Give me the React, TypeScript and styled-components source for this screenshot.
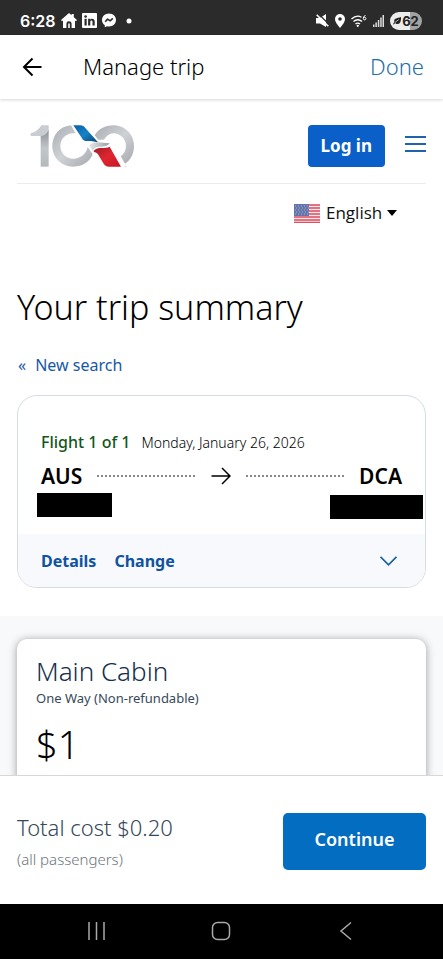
import React from "react";
import styled, { createGlobalStyle } from "styled-components";

const GlobalStyle = createGlobalStyle`
  *, *::before, *::after { box-sizing: border-box; }
  html, body { margin: 0; padding: 0; background: #fff; }
  body, button, select { font-family: "Noto Sans", "Open Sans", sans-serif; }
  button { border: 0; background: none; padding: 0; cursor: pointer; }
  svg { display: block; flex: none; }
`;

const Screen = styled.div`
  display: flex;
  flex-direction: column;
  height: 100vh;
  overflow: hidden;
  color: #000;
`;

const StatusBar = styled.div`
  display: flex;
  align-items: center;
  justify-content: space-between;
  flex: none;
  height: 35px;
  padding: 6px 21px 0 20px;
  background: #2b2b2b;
  color: #fff;
`;

const StatusGroup = styled.div<{ $gap: number }>`
  display: flex;
  align-items: center;
  gap: ${(p) => p.$gap}px;
`;

const Clock = styled.span`
  font: 600 16px/20px Inter, sans-serif;
`;

const Battery = styled.span`
  display: flex;
  align-items: center;
  justify-content: center;
  gap: 1px;
  width: 32px;
  height: 18px;
  border-radius: 9px;
  background: linear-gradient(90deg, #ececec 62%, #a2a2a2 62%);
  color: #222;
  font: 700 13px/18px Inter, sans-serif;
`;

const AppBar = styled.header`
  display: flex;
  align-items: center;
  flex: none;
  height: 64px;
  padding: 0 19px 0 22px;
  background: #fff;
  box-shadow: 0 1px 3px rgba(0, 0, 0, 0.16);
  z-index: 1;
`;

const AppTitle = styled.span`
  flex: 1;
  margin: 0 0 2px 41px;
  font: 300 22px/30px "Noto Sans", sans-serif;
`;

const DoneButton = styled.button`
  margin-bottom: 2px;
  color: #1f6ea8;
  font-size: 22px;
  font-weight: 300;
  line-height: 30px;
`;

const Content = styled.main`
  flex: 1;
  min-height: 0;
  overflow: hidden;
`;

const SiteHeader = styled.div`
  display: flex;
  align-items: center;
  margin: 0 17px;
  height: 85px;
  padding: 9px 0 0 13px;
  border-bottom: 1px solid #ececec;
`;

const LoginButton = styled.button`
  height: 42px;
  margin-left: auto;
  padding: 0 13px;
  border-radius: 4px;
  background: #0a5fc8;
  color: #fff;
  font-size: 17px;
  font-weight: 700;
`;

const MenuButton = styled.button`
  margin: 0 0 4px 20px;
`;

const LanguageRow = styled.div`
  display: flex;
  align-items: center;
  justify-content: flex-end;
  gap: 6px;
  padding: 16px 46px 0 17px;
`;

const LanguagePicker = styled.div`
  display: flex;
  align-items: center;
  gap: 4px;
`;

const LanguageSelect = styled.select`
  appearance: none;
  border: 0;
  padding: 0;
  background: none;
  color: #111;
  font: 400 17px/26px "Open Sans", sans-serif;
`;

const Summary = styled.section`
  padding: 56px 17px 28px;
`;

const Heading = styled.h1`
  margin: 0;
  font: 300 34px/50px "Noto Sans", sans-serif;
`;

const BackLink = styled.a`
  display: inline-flex;
  gap: 9px;
  margin: 21px 1px 18px;
  color: #1758a6;
  font-size: 16px;
  line-height: 24px;
  text-decoration: none;
`;

const TripCard = styled.article`
  border: 1px solid #d5dce2;
  border-radius: 20px;
  overflow: hidden;
  background: #fff;
`;

const TripBody = styled.div`
  padding: 33px 23px 15px;
`;

const FlightLine = styled.div`
  display: flex;
  align-items: baseline;
  gap: 11px;
  line-height: 26px;
`;

const FlightNumber = styled.h2`
  margin: 0;
  color: #14571a;
  font-size: 16px;
  font-weight: 500;
`;

const FlightDate = styled.span`
  font-size: 14px;
  font-weight: 300;
`;

const Route = styled.div`
  display: flex;
  align-items: center;
  margin-top: 6px;
`;

const Airport = styled.span`
  font-size: 21px;
  font-weight: 600;
  line-height: 28px;
`;

const Dots = styled.span`
  flex: 1;
  height: 2px;
  margin: 0 14px;
  background: radial-gradient(circle, #85898d 1px, transparent 1px) 0 0 / 4px 2px repeat-x;
`;

const Redactions = styled.div`
  display: flex;
  align-items: flex-start;
  justify-content: space-between;
  margin: 3px -21px 0 -4px;
`;

const Redacted = styled.span<{ $width: number; $drop: number }>`
  width: ${(p) => p.$width}px;
  height: 24px;
  margin-top: ${(p) => p.$drop}px;
  background: #000;
`;

const TripActions = styled.div`
  display: flex;
  align-items: center;
  gap: 18px;
  height: 53px;
  padding: 0 28px 0 23px;
  background: #f7f9fc;
`;

const TextButton = styled.button`
  color: #10539f;
  font-size: 16px;
  font-weight: 700;
  line-height: 24px;
`;

const ExpandButton = styled.button`
  margin-left: auto;
`;

const FareSection = styled.section`
  padding: 23px 17px 0;
  background: #f7f9fb;
`;

const FareCard = styled.article`
  height: 240px;
  padding: 14px 19px;
  border-radius: 10px;
  background: #fff;
  box-shadow: 0 1px 8px rgba(0, 0, 0, 0.38);
`;

const FareName = styled.h2`
  margin: 0;
  color: #15304c;
  font: 300 26px/36px "Noto Sans", sans-serif;
`;

const FareNote = styled.p`
  margin: 0;
  color: #36495a;
  font-size: 13px;
  line-height: 18px;
`;

const FarePrice = styled.p`
  margin: 11px 0 0;
  font-size: 38px;
  font-weight: 300;
  line-height: 52px;
`;

const TotalBar = styled.footer`
  display: flex;
  align-items: center;
  justify-content: space-between;
  flex: none;
  height: 129px;
  padding: 2px 17px 0;
  border-top: 1px solid #d5d7d9;
  background: #fff;
  z-index: 1;
`;

const TotalCost = styled.p`
  margin: 0;
  color: #36495a;
  font-size: 22px;
  font-weight: 300;
  line-height: 32px;
`;

const TotalNote = styled.p`
  margin: 4px 0 0;
  color: #6c757c;
  font-size: 15px;
  font-weight: 300;
  line-height: 24px;
`;

const ContinueButton = styled.button`
  width: 143px;
  height: 57px;
  padding-bottom: 4px;
  border-radius: 5px;
  background: #036dc1;
  color: #fff;
  font-size: 18px;
  font-weight: 600;
`;

const SystemNav = styled.nav`
  display: flex;
  align-items: center;
  justify-content: space-between;
  flex: none;
  height: 55px;
  padding: 0 88px 2px 86px;
  background: #000;
`;

const HomeIcon = () => (
  <svg width="16" height="15" viewBox="0 0 16 15" fill="#fff" aria-hidden="true">
    <path d="M8 0 10.6 2.3V1h2.2v3.2L16 7l-1 1.2-1-.7V15h-3.4v-4.5Q10.500 8.200 8 8.200t-2.600 2.300V15H2V7.500l-1 .700L0 7Z" />
    <path d="M7.200 10.500h1.600V15H7.200Z" />
  </svg>
);

const LinkedInIcon = () => (
  <svg width="15" height="15" viewBox="0 0 15 15" aria-hidden="true">
    <rect width="15" height="15" rx="1" fill="#fff" />
    <g fill="#2b2b2b">
      <circle cx="3.600" cy="3.500" r="1.300" />
      <path d="M2.500 5.800h2.200v6.700H2.500ZM6.100 5.800h2.100v.9c.9-1.600 4.500-1.600 4.500 1.700v4.100h-2.200V8.900c0-1.800-2.200-1.600-2.200 0v3.600H6.100Z" />
    </g>
  </svg>
);

const MessengerIcon = () => (
  <svg width="14" height="15" viewBox="0 0 14 15" aria-hidden="true">
    <path d="M7 .5c3.900 0 7 2.800 7 6.500s-3.100 6.500-7 6.500c-.7 0-1.300-.1-2-.3l-2.200 1v-1.900C1.100 11.100 0 9.200 0 7 0 3.300 3.100.5 7 .5Z" fill="#fff" />
    <path d="m3.200 8.700 2.400-2.600 2.500 1.700 2.700-2.400" fill="none" stroke="#2b2b2b" strokeWidth="1.600" strokeLinejoin="round" />
  </svg>
);

const MuteIcon = () => (
  <svg width="13" height="13" viewBox="0 0 13 13" aria-hidden="true">
    <path d="M0 4h4l6-4v13L4 9.500H0Z" fill="#fff" />
    <path d="m2.500-.2 11 11" stroke="#2b2b2b" strokeWidth="1.300" />
    <path d="m.7.7 11.600 11.600" stroke="#fff" strokeWidth="1.600" />
  </svg>
);

const PinIcon = () => (
  <svg width="10" height="14" viewBox="0 0 10 14" aria-hidden="true">
    <path d="M5 0a5 5 0 0 1 5 5c0 3.500-5 9-5 9S0 8.500 0 5a5 5 0 0 1 5-5Z" fill="#fff" />
    <circle cx="5" cy="5" r="1.800" fill="#2b2b2b" />
  </svg>
);

const WifiIcon = () => (
  <svg width="16" height="12" viewBox="0 0 16 12" fill="none" stroke="#fff" strokeWidth="1.300" aria-hidden="true">
    <path d="M.5 4Q5.500-.7 10.500 2.200M2.500 6.500q4.300-3.500 8.600 0M4.500 9q2.300-1.900 4.600 0" />
    <circle cx="6.800" cy="10.800" r=".5" fill="#fff" />
    <path d="M14.500.5Q12.300 1 12.300 3.200" strokeWidth="1" />
    <circle cx="13.600" cy="3.600" r="1.300" strokeWidth="1" />
  </svg>
);

const SignalIcon = () => (
  <svg width="11" height="12" viewBox="0 0 11 12" fill="#ddd" aria-hidden="true">
    <path d="M0 9.500h1.500V12H0ZM2.400 7.500h1.500V12H2.400ZM4.800 5h1.500v7H4.800ZM7.200 2.500h1.500V12H7.200ZM9.500 0H11v12H9.500Z" />
  </svg>
);

const LeafIcon = () => (
  <svg width="8" height="8" viewBox="0 0 8 8" aria-hidden="true">
    <path d="M8 0c.2 4-.7 7-3.700 7C3.200 7 2.600 6.500 2.200 6L.8 7.600 0 7l1.400-1.800C.4 1.200 4 1.300 8 0Z" fill="#222" />
    <path d="M2 5.500 5.800 2.500" stroke="#ececec" strokeWidth=".7" />
  </svg>
);

const ArrowIcon = ({ back = false }: { back?: boolean }) => (
  <svg width="20" height="20" viewBox="0 0 20 20" fill="none" stroke="#000" strokeWidth={back ? 2 : 1.5} aria-hidden="true">
    {back ? <path d="M19.500 10H2M10.500 1.500 2 10l8.500 8.500" /> : <path d="M.5 10H19M11 2l8 8-8 8" />}
  </svg>
);

const CentennialLogo = () => (
  <svg width="106" height="44" viewBox="60 42 318 132" role="img" aria-label="American Airlines 100 years">
    <defs>
      <linearGradient id="silver" x1="0" y1="0" x2="1" y2="1">
        <stop offset="0" stopColor="#a9adb2" />
        <stop offset=".5" stopColor="#cfd2d5" />
        <stop offset="1" stopColor="#a4a9ae" />
      </linearGradient>
      <linearGradient id="stem" x1="0" y1="0" x2="0" y2="1">
        <stop offset="0" stopColor="#8c9196" />
        <stop offset=".5" stopColor="#c3c7ca" />
        <stop offset="1" stopColor="#b4b9bd" />
      </linearGradient>
      <linearGradient id="blue" x1="0" y1="0" x2="1" y2="1">
        <stop offset="0" stopColor="#0d5fa3" />
        <stop offset=".5" stopColor="#1683c7" />
        <stop offset="1" stopColor="#0a3f70" />
      </linearGradient>
      <linearGradient id="beak" x1="0" y1="0" x2="1" y2="0">
        <stop offset="0" stopColor="#e6e8ea" />
        <stop offset="1" stopColor="#9a9fa4" />
      </linearGradient>
      <linearGradient id="red" x1="0" y1="0" x2="1" y2="1">
        <stop offset="0" stopColor="#9d1c25" />
        <stop offset=".5" stopColor="#e02630" />
        <stop offset="1" stopColor="#c21a26" />
      </linearGradient>
    </defs>
    <path d="M92 60h24v110H92Z" fill="url(#stem)" />
    <path d="M94 46h22v14q-8 18-26 18H62V70q20-4 32-24Z" fill="#c9ccd0" />
    <path d="M183 46C150 48 127 75 127 108c0 35 28 62 63 62 27 0 49-14 58-37l-15-22c-4 21-22 35-43 35-22 0-39-17-39-38s17-38 39-38h7Z" fill="url(#silver)" />
    <path d="M254 76c11-19 31-30 56-30 35 0 62 27 62 62 0 23-10 42-27 53l-13-22c10-7 16-18 16-31 0-21-17-38-38-38-11 0-20 7-28 19h-17Z" fill="url(#silver)" />
    <path d="M190 46h21c7 0 11 3 15 8l38 43c-12-3-22-4-33-4-8 0-13-3-16-10Z" fill="url(#blue)" />
    <path d="M237 106c7-6 15-9 25-9 14 0 24 3 37 3-6 8-16 10-27 10-14 0-20 4-23 14Z" fill="url(#beak)" />
    <path d="M251 126c2-9 10-12 23-12 11 0 18-1 25-4l34 60h-36c-8 0-13-3-17-10l-16-27c-4-5-8-7-13-7Z" fill="url(#red)" />
    <path d="M344 169h6M347 169v3" stroke="#aaa" strokeWidth="1" fill="none" />
  </svg>
);

const MenuIcon = () => (
  <svg width="21" height="18" viewBox="0 0 21 18" stroke="#1f63ad" strokeWidth="2" aria-hidden="true">
    <path d="M0 2h21M0 9h21M0 16h21" />
  </svg>
);

const FlagIcon = () => (
  <svg width="26" height="19" viewBox="0 0 26 19" aria-hidden="true">
    <rect width="26" height="19" fill="#f7e6e8" />
    <path d="M0 1h26M0 4h26M0 7h26M0 10h26M0 13h26M0 16h26M0 18.500h26" stroke="#d94f60" strokeWidth="1.500" />
    <rect width="15" height="12" fill="#6475ab" />
    <path d="M1 2h14M2 4h13M1 6h14M2 8h13M1 10h14" stroke="#a3afd2" strokeWidth="1" strokeDasharray="1 2" />
  </svg>
);

const CaretIcon = () => (
  <svg width="10" height="6" viewBox="0 0 10 6" aria-hidden="true">
    <path d="M0 0h10L5 6Z" fill="#000" />
  </svg>
);

const ChevronIcon = () => (
  <svg width="17" height="10" viewBox="0 0 17 10" fill="none" stroke="#17639f" strokeWidth="1.700" aria-hidden="true">
    <path d="m.5.8 8 8 8-8" />
  </svg>
);

const RecentsIcon = () => (
  <svg width="20" height="20" viewBox="0 0 20 20" stroke="#a9a9a9" strokeWidth="1.500" aria-hidden="true">
    <path d="M3 1v18M10.500 1v18M18 1v18" />
  </svg>
);

const NavHomeIcon = () => (
  <svg width="20" height="20" viewBox="0 0 20 20" fill="none" stroke="#a9a9a9" strokeWidth="1.500" aria-hidden="true">
    <rect x="1.500" y="1.500" width="17" height="17" rx="5" />
  </svg>
);

const NavBackIcon = () => (
  <svg width="20" height="20" viewBox="0 0 20 20" fill="none" stroke="#a9a9a9" strokeWidth="1.500" aria-hidden="true">
    <path d="M16 1.500 6 10l10 8.500" />
  </svg>
);

export default function App() {
  return (
    <>
      <GlobalStyle />
      <Screen>
        <StatusBar>
          <StatusGroup $gap={5}>
            <Clock>6:28</Clock>
            <HomeIcon />
            <LinkedInIcon />
            <MessengerIcon />
            <svg width="20" height="6" viewBox="0 0 20 6" aria-hidden="true">
              <circle cx="8" cy="3" r="2.500" fill="#fff" />
            </svg>
          </StatusGroup>
          <StatusGroup $gap={6}>
            <MuteIcon />
            <PinIcon />
            <WifiIcon />
            <SignalIcon />
            <Battery>
              <LeafIcon />
              62
            </Battery>
          </StatusGroup>
        </StatusBar>

        <AppBar>
          <button aria-label="Back">
            <ArrowIcon back />
          </button>
          <AppTitle>Manage trip</AppTitle>
          <DoneButton>Done</DoneButton>
        </AppBar>

        <Content>
          <SiteHeader>
            <CentennialLogo />
            <LoginButton>Log in</LoginButton>
            <MenuButton aria-label="Menu">
              <MenuIcon />
            </MenuButton>
          </SiteHeader>

          <LanguageRow>
            <FlagIcon />
            <LanguagePicker>
              <LanguageSelect aria-label="Language" defaultValue="en">
                <option value="en">English</option>
              </LanguageSelect>
              <CaretIcon />
            </LanguagePicker>
          </LanguageRow>

          <Summary>
            <Heading>Your trip summary</Heading>
            <BackLink href="#search">
              <span>«</span>
              <span>New search</span>
            </BackLink>

            <TripCard>
              <TripBody>
                <FlightLine>
                  <FlightNumber>Flight 1 of 1</FlightNumber>
                  <FlightDate>Monday, January 26, 2026</FlightDate>
                </FlightLine>
                <Route>
                  <Airport>AUS</Airport>
                  <Dots />
                  <ArrowIcon />
                  <Dots />
                  <Airport>DCA</Airport>
                </Route>
                <Redactions>
                  <Redacted $width={75} $drop={0} />
                  <Redacted $width={93} $drop={2} />
                </Redactions>
              </TripBody>
              <TripActions>
                <TextButton>Details</TextButton>
                <TextButton>Change</TextButton>
                <ExpandButton aria-label="Expand flight">
                  <ChevronIcon />
                </ExpandButton>
              </TripActions>
            </TripCard>
          </Summary>

          <FareSection>
            <FareCard>
              <FareName>Main Cabin</FareName>
              <FareNote>One Way (Non-refundable)</FareNote>
              <FarePrice>$1</FarePrice>
            </FareCard>
          </FareSection>
        </Content>

        <TotalBar>
          <div>
            <TotalCost>Total cost $0.20</TotalCost>
            <TotalNote>(all passengers)</TotalNote>
          </div>
          <ContinueButton>Continue</ContinueButton>
        </TotalBar>

        <SystemNav aria-label="System">
          <button aria-label="Recent apps">
            <RecentsIcon />
          </button>
          <button aria-label="Home">
            <NavHomeIcon />
          </button>
          <button aria-label="Go back">
            <NavBackIcon />
          </button>
        </SystemNav>
      </Screen>
    </>
  );
}
